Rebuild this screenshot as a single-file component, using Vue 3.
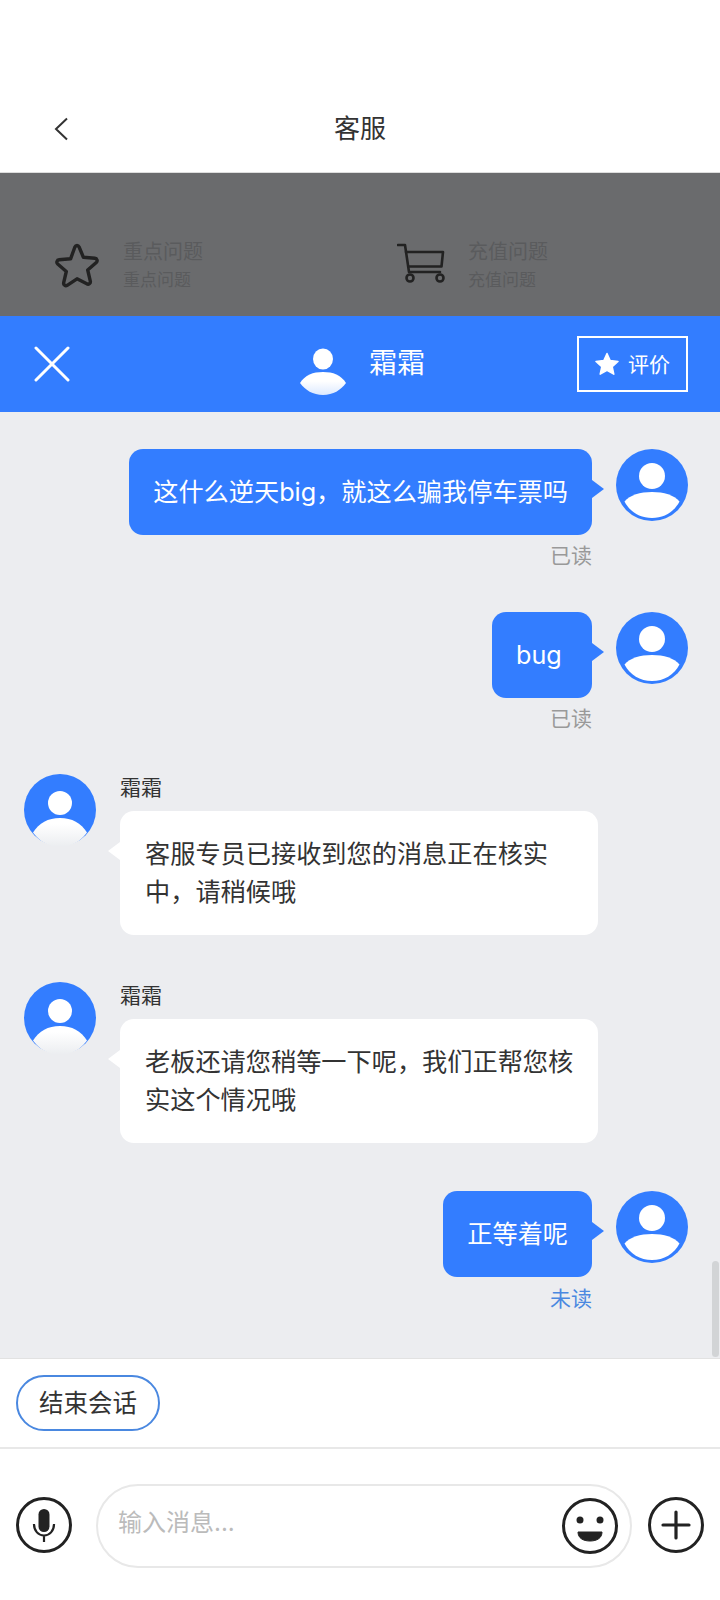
<script setup>
const messages = [
  { id: 1, side: 'right', text: '这什么逆天big，就这么骗我停车票吗', status: '已读' },
  { id: 2, side: 'right', text: 'bug', status: '已读' },
  { id: 3, side: 'left', name: '霜霜', text: '客服专员已接收到您的消息正在核实中，请稍候哦' },
  { id: 4, side: 'left', name: '霜霜', text: '老板还请您稍等一下呢，我们正帮您核实这个情况哦' },
  { id: 5, side: 'right', text: '正等着呢', status: '未读', unread: true }
]
</script>

<template>
  <div class="page">
    <header class="top">
      <svg class="back" width="14" height="24" viewBox="0 0 14 24"><path d="M13 1.500 2 12l11 10.500" fill="none" stroke="#333" stroke-width="2"/></svg>
      <span class="title">客服</span>
    </header>

    <section class="dim">
      <div class="dim-item">
        <svg width="46" height="46" viewBox="0 0 46 46"><path d="M23 2.500c1 0 1.700.6 2.100 1.500l4.300 10.300 11.500 1c2.200.2 3 2.700 1.400 4.200l-8.600 7.500 2.600 11.200c.5 2.100-1.700 3.700-3.500 2.600L23 35.800l-9.800 6.500c-1.800 1.100-4-.5-3.500-2.600l2.600-11.200-8.600-7.500c-1.600-1.500-.8-4 1.400-4.200l11.500-1L20.900 4c.4-.9 1.100-1.500 2.100-1.500z" fill="none" stroke="#222" stroke-width="3.400" stroke-linejoin="round"/></svg>
        <div class="dim-text"><span class="dim-a">重点问题</span><span class="dim-b">重点问题</span></div>
      </div>
      <div class="dim-item">
        <svg width="48" height="40" viewBox="0 0 48 40"><g fill="none" stroke="#222" stroke-width="2.600" stroke-linejoin="round" stroke-linecap="round"><path d="M1 2h7l4 27h31"/><path d="M9 9h37l-1.500 14.500H12"/><circle cx="13" cy="35" r="3.500"/><circle cx="43" cy="35" r="3.500"/></g></svg>
        <div class="dim-text"><span class="dim-a">充值问题</span><span class="dim-b">充值问题</span></div>
      </div>
    </section>

    <section class="agent">
      <svg class="close" width="36" height="36" viewBox="0 0 36 36"><path d="M2 2l32 32M34 2 2 34" stroke="#fff" stroke-width="3" stroke-linecap="round"/></svg>
      <div class="agent-mid">
        <svg width="48" height="48" viewBox="0 0 48 48">
          <defs><linearGradient id="hb" x1="0" y1="0" x2="0" y2="1"><stop offset="0.4" stop-color="#fff"/><stop offset="1" stop-color="#dce9ff"/></linearGradient></defs>
          <ellipse cx="24" cy="11" rx="10" ry="10.500" fill="#fff"/>
          <path d="M1 35C6 27 14 24 24 24s18 3 23 11c-5 7-13 12-23 12S6 42 1 35z" fill="url(#hb)"/>
        </svg>
        <span class="agent-name">霜霜</span>
      </div>
      <div class="rate">
        <svg width="24" height="24" viewBox="0 0 24 24"><path d="M12 1.500l3.200 7 7.800.9-5.800 5.200 1.600 7.600L12 18.300l-6.800 3.900 1.600-7.600L1 9.400l7.800-.9z" fill="#fff" stroke="#fff" stroke-width="1.500" stroke-linejoin="round"/></svg>
        <span>评价</span>
      </div>
    </section>

    <main class="chat">
      <div class="scrollbar"></div>
      <div v-for="m in messages" :key="m.id" class="msg" :class="m.side">
        <template v-if="m.side === 'right'">
          <div class="body">
            <div class="bubble">{{ m.text }}</div>
            <div class="status" :class="{ unread: m.unread }">{{ m.status }}</div>
          </div>
          <svg class="avatar" width="72" height="72" viewBox="0 0 72 72">
            <circle cx="36" cy="36" r="36" fill="#337dff"/>
            <circle cx="36" cy="27" r="13" fill="#fff"/>
            <path d="M8.500 52.500C14 46 24 43 36 43s22 3 27.500 9.500C58 63 48 69 36 69S14 63 8.500 52.500z" fill="#fff"/>
          </svg>
        </template>
        <template v-else>
          <svg class="avatar" width="72" height="72" viewBox="0 0 72 72">
            <defs><linearGradient :id="'lb' + m.id" x1="0" y1="0" x2="0" y2="1"><stop offset="0.2" stop-color="#fff"/><stop offset="1" stop-color="#ebedf0"/></linearGradient></defs>
            <circle cx="36" cy="36" r="36" fill="#337dff"/>
            <circle cx="36" cy="29" r="12" fill="#fff"/>
            <path d="M9 58.500C15 49 24 44 36 44s21 5 27 14.500C57 67 47 73 36 73S15 67 9 58.500z" :fill="'url(#lb' + m.id + ')'"/>
          </svg>
          <div class="body">
            <div class="name">{{ m.name }}</div>
            <div class="bubble">{{ m.text }}</div>
          </div>
        </template>
      </div>
    </main>

    <section class="quick">
      <button class="end">结束会话</button>
    </section>

    <footer class="inputbar">
      <svg width="56" height="56" viewBox="0 0 56 56">
        <circle cx="28" cy="28" r="26.500" fill="none" stroke="#222" stroke-width="3"/>
        <rect x="22.500" y="12" width="11" height="23" rx="5.500" fill="#222"/>
        <path d="M18 27c0 7 4.500 11.500 10 11.500S38 34 38 27M28 38.500v6.500" fill="none" stroke="#222" stroke-width="2.200"/>
      </svg>
      <div class="field">
        <span class="placeholder">输入消息...</span>
        <svg width="56" height="56" viewBox="0 0 56 56">
          <circle cx="28" cy="28" r="26.500" fill="none" stroke="#222" stroke-width="3"/>
          <circle cx="18" cy="22" r="3.500" fill="#222"/>
          <circle cx="38" cy="22" r="3.500" fill="#222"/>
          <path d="M16 34h24c0 6-5 9-12 9s-12-3-12-9z" fill="#222" stroke="#222" stroke-width="1" stroke-linejoin="round"/>
        </svg>
      </div>
      <svg width="56" height="56" viewBox="0 0 56 56">
        <circle cx="28" cy="28" r="26.500" fill="none" stroke="#222" stroke-width="3"/>
        <path d="M15 28h26M28 15v26" stroke="#222" stroke-width="3.200" stroke-linecap="round"/>
      </svg>
    </footer>
  </div>
</template>

<style scoped>
.page {
  width: 720px;
  height: 1600px;
  display: flex;
  flex-direction: column;
  background: #fff;
  font-family: Inter, "Noto Sans CJK SC", sans-serif;
  color: #333;
  overflow: hidden;
}
.top {
  height: 86px;
  margin-top: 86px;
  display: flex;
  align-items: center;
  justify-content: center;
  position: relative;
  border-bottom: 1px solid #ddd;
  flex: none;
}
.back { position: absolute; left: 54px; top: 31px; }
.title { font-size: 26px; line-height: 36px; color: #333; }
.dim {
  height: 143px;
  flex: none;
  background: #6a6b6d;
  display: grid;
  grid-template-columns: 343px 1fr;
  padding: 70px 0 0 54px;
  box-sizing: border-box;
}
.dim-item { display: flex; align-items: flex-start; gap: 23px; }
.dim-text { display: flex; flex-direction: column; margin-top: -5px; color: #5a5b5d; }
.dim-a { font-size: 20px; line-height: 28px; }
.dim-b { font-size: 17px; line-height: 28px; }
.agent {
  height: 96px;
  flex: none;
  background: #337dff;
  display: flex;
  align-items: center;
  padding: 0 32px 0 34px;
  box-sizing: border-box;
  color: #fff;
}
.agent-mid { display: flex; align-items: center; gap: 22px; margin-left: 229px; margin-right: auto; padding-top: 15px; }
.agent-name { font-size: 28px; line-height: 36px; margin-top: -18px; }
.rate {
  width: 111px;
  height: 56px;
  box-sizing: border-box;
  border: 2px solid #fff;
  display: flex;
  align-items: center;
  justify-content: center;
  gap: 9px;
  font-size: 21px;
}
.rate span { margin-top: -2px; }
.chat {
  flex: 1;
  min-height: 0;
  background: #ecedf0;
  position: relative;
  padding-top: 37px;
  box-sizing: border-box;
  border-bottom: 1px solid #e2e2e2;
}
.scrollbar {
  position: absolute;
  right: 1px;
  top: 849px;
  width: 7px;
  height: 96px;
  border-radius: 4px;
  background: #d2d4d6;
}
.msg { display: flex; align-items: flex-start; }
.msg.right { justify-content: flex-end; padding-right: 32px; gap: 24px; height: 162px; }
.msg.left { padding-left: 24px; gap: 24px; height: 208px; }
.msg:nth-child(2) { height: 163px; }
.msg:nth-child(5) { height: 209px; }
.msg:nth-child(3) .bubble { min-width: 100px; }
.avatar { flex: none; }
.body { display: flex; flex-direction: column; }
.right .body { align-items: flex-end; }
.bubble {
  position: relative;
  font-size: 25.200px;
  line-height: 38px;
  padding: 24px;
  border-radius: 14px;
  box-sizing: border-box;
}
.bubble::after {
  content: "";
  position: absolute;
  top: 31px;
  width: 0;
  height: 0;
  border-top: 9px solid transparent;
  border-bottom: 9px solid transparent;
}
.right .bubble { background: #337dff; color: #fff; }
.right .bubble::after { left: 100%; border-left: 12px solid #337dff; }
.left .bubble { background: #fff; color: #333; width: 478px; padding: 24px 23px 24px 25px; }
.left .bubble::after { right: 100%; border-right: 12px solid #fff; }
.name { font-size: 21px; line-height: 28px; height: 37px; color: #333; }
.status { font-size: 21px; line-height: 28px; margin-top: 7px; color: #999; }
.status.unread { color: #4a88e0; margin-top: 8px; }
.quick {
  height: 90px;
  flex: none;
  display: flex;
  align-items: center;
  padding-left: 16px;
  box-sizing: border-box;
  border-bottom: 2px solid #e8e8e8;
}
.end {
  width: 144px;
  height: 56px;
  border: 2px solid #4a88e0;
  border-radius: 28px;
  background: #fff;
  font: inherit;
  font-size: 24.500px;
  color: #333;
  padding: 0 0 4px;
}
.inputbar {
  height: 151px;
  flex: none;
  box-sizing: border-box;
  padding: 35px 16px 0;
  display: flex;
  gap: 24px;
  align-items: flex-start;
}
.inputbar > svg { margin-top: 13px; }
.field {
  width: 536px;
  height: 84px;
  margin-right: -8px;
  box-sizing: border-box;
  border: 2px solid #e8e8e8;
  border-radius: 42px;
  display: flex;
  align-items: center;
  justify-content: space-between;
  padding: 0 12px 0 20px;
}
.placeholder { font-size: 24px; color: #bbb; margin-top: -12px; }
</style>
